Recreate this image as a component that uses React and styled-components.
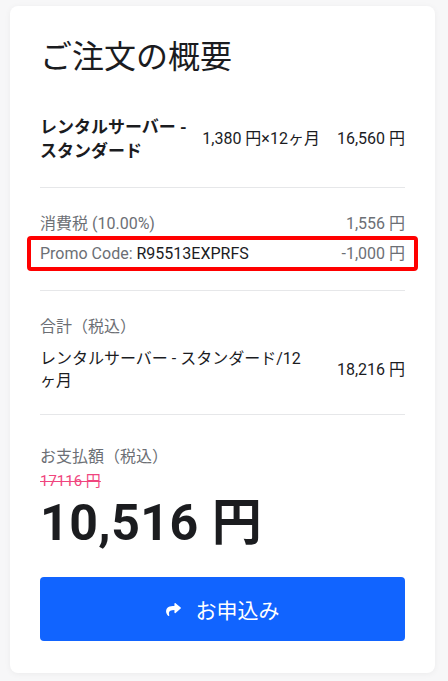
import styled, { createGlobalStyle } from "styled-components";

const GlobalStyle = createGlobalStyle`
  body {
    margin: 0;
    background: #f7f7f8;
    font-family: Roboto, "Noto Sans CJK JP", sans-serif;
    color: #1b1c1f;
  }
`;

const Page = styled.div`
  padding: 6px 13px 9px 10px;
`;

const Card = styled.section`
  background: #fff;
  border-radius: 8px;
  box-shadow: 0 1px 6px rgba(0, 0, 0, 0.05);
  padding: 29px 30px 32px;
`;

const Title = styled.h1`
  margin: 0 0 36px;
  font-size: 32px;
  font-weight: 400;
  line-height: 44px;
  color: #1b1c1f;
`;

const Section = styled.div`
  padding: ${({ $pad }) => $pad || "20px 0"};
  border-bottom: ${({ $last }) => ($last ? "none" : "1px solid #e6e7e9")};
`;

const ItemRow = styled.div`
  display: grid;
  grid-template-columns: 1fr auto auto;
  align-items: center;
  column-gap: 17px;
  font-size: 16px;
  line-height: 24px;
`;

const ItemName = styled.div`
  font-size: 17px;
  font-weight: 700;
  white-space: nowrap;
  margin-right: -9px;
`;

const Qty = styled.div`
  white-space: nowrap;
`;

const Amount = styled.div`
  white-space: nowrap;
  text-align: right;
  color: #1b1c1f;
`;

const Line = styled.div`
  display: flex;
  justify-content: space-between;
  align-items: center;
  font-size: 16px;
  line-height: 24px;
  color: #6c6f75;
  padding: ${({ $boxed }) => ($boxed ? "2px 9px 1px" : "0")};
  margin: ${({ $boxed }) => ($boxed ? "0 -13px" : "0")};
  border: ${({ $boxed }) => ($boxed ? "4px solid #ff0000" : "none")};
  border-radius: 4px;
`;

const Code = styled.span`
  color: #1b1c1f;
`;

const Label = styled.div`
  font-size: 16px;
  line-height: 24px;
  color: #6c6f75;
  margin-bottom: ${({ $mb }) => $mb || "0"};
`;

const TotalRow = styled.div`
  display: flex;
  align-items: center;
  justify-content: space-between;
  gap: 24px;
  font-size: 16px;
  line-height: 22px;
`;

const TotalName = styled.div`
  flex: 1;
`;

const Strike = styled.div`
  font-size: 15px;
  line-height: 20px;
  margin-top: 2px;
  color: #f0457e;
  text-decoration: line-through;
`;

const Big = styled.div`
  font-size: 50px;
  font-weight: 700;
  line-height: 64px;
  margin: 0 0 22px;
  letter-spacing: 0.5px;
`;

const Button = styled.button`
  width: 100%;
  height: 64px;
  border: none;
  border-radius: 4px;
  background: #1164ff;
  color: #fff;
  font-family: inherit;
  font-size: 21px;
  display: flex;
  align-items: center;
  justify-content: center;
  gap: 15px;
  cursor: pointer;
`;

const ShareIcon = () => (
  <svg width="15" height="13" viewBox="0 0 512 448" fill="#fff">
    <path d="M503.7 157.4 327.7 5.4C312.3-7.9 288 2.9 288 23.5v80.1C127.4 105.4 0 137.6 0 289.9c0 61.4 39.6 122.3 83.3 154.1 13.7 9.9 33.1-2.5 28.1-18.6C66 280.5 133.3 241.1 288 238.9V327c0 20.6 24.3 31.4 39.7 18.1l176-152c11.1-9.6 11.1-26.8 0-35.7z" />
  </svg>
);

export default function App() {
  return (
    <>
      <GlobalStyle />
      <Page>
        <Card>
          <Title>ご注文の概要</Title>
          <Section $pad="0 0 24px">
            <ItemRow>
              <ItemName>
                レンタルサーバー -<br />
                スタンダード
              </ItemName>
              <Qty>1,380 円×12ヶ月</Qty>
              <Amount>16,560 円</Amount>
            </ItemRow>
          </Section>
          <Section $pad="24px 0 19px">
            <Line>
              <span>消費税 (10.00%)</span>
              <span>1,556 円</span>
            </Line>
            <Line $boxed>
              <span>
                Promo Code: <Code>R95513EXPRFS</Code>
              </span>
              <span>-1,000 円</span>
            </Line>
          </Section>
          <Section $pad="24px 0 22px">
            <Label $mb="9px">合計（税込）</Label>
            <TotalRow>
              <TotalName>レンタルサーバー - スタンダード/12ヶ月</TotalName>
              <Amount>18,216 円</Amount>
            </TotalRow>
          </Section>
          <Section $pad="30px 0 0" $last>
            <Label>お支払額（税込）</Label>
            <Strike>17116 円</Strike>
            <Big>10,516 円</Big>
            <Button>
              <ShareIcon />
              お申込み
            </Button>
          </Section>
        </Card>
      </Page>
    </>
  );
}
